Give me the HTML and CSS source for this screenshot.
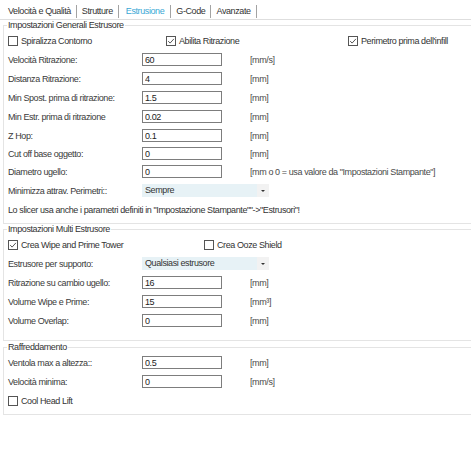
FILE: index.html
```html
<!DOCTYPE html>
<html lang="it">
<head>
<meta charset="utf-8">
<title>Estrusione</title>
<link rel="stylesheet" href="styles.css">
</head>
<body>
<div class="window">
  <nav class="tabs">
    <span class="tab">Velocità e Qualità</span>
    <span class="tab">Strutture</span>
    <span class="tab active">Estrusione</span>
    <span class="tab">G-Code</span>
    <span class="tab">Avanzate</span>
  </nav>
  <div class="panel">
    <fieldset class="group">
      <legend>Impostazioni Generali Estrusore</legend>
      <div class="row checks">
        <label class="check w158"><svg class="box" viewBox="0 0 10 10"><rect x="0.5" y="0.5" width="9" height="9" fill="#fff" stroke="#555"/></svg>Spiralizza Contorno</label>
        <label class="check w182"><svg class="box" viewBox="0 0 10 10"><rect x="0.5" y="0.5" width="9" height="9" fill="#fff" stroke="#555"/><path d="M2.2 5.1 L4.1 7.1 L7.9 2.9" fill="none" stroke="#444" stroke-width="0.9"/></svg>Abilita Ritrazione</label>
        <label class="check"><svg class="box" viewBox="0 0 10 10"><rect x="0.5" y="0.5" width="9" height="9" fill="#fff" stroke="#555"/><path d="M2.2 5.1 L4.1 7.1 L7.9 2.9" fill="none" stroke="#444" stroke-width="0.9"/></svg>Perimetro prima dell'infill</label>
      </div>
      <div class="row"><span class="lbl">Velocità Ritrazione:</span><input class="field" value="60" readonly><span class="unit">[mm/s]</span></div>
      <div class="row"><span class="lbl">Distanza Ritrazione:</span><input class="field" value="4" readonly><span class="unit">[mm]</span></div>
      <div class="row"><span class="lbl">Min Spost. prima di ritrazione:</span><input class="field" value="1.5" readonly><span class="unit">[mm]</span></div>
      <div class="row"><span class="lbl">Min Estr. prima di ritrazione</span><input class="field" value="0.02" readonly><span class="unit">[mm]</span></div>
      <div class="row"><span class="lbl">Z Hop:</span><input class="field" value="0.1" readonly><span class="unit">[mm]</span></div>
      <div class="row tight"><span class="lbl">Cut off base oggetto:</span><input class="field" value="0" readonly><span class="unit">[mm]</span></div>
      <div class="row"><span class="lbl">Diametro ugello:</span><input class="field" value="0" readonly><span class="unit">[mm o 0 = usa valore da "Impostazioni Stampante"]</span></div>
      <div class="row"><span class="lbl">Minimizza attrav. Perimetri::</span><span class="select"><span class="select-value">Sempre</span><span class="select-arrow"></span></span></div>
      <div class="row"><span class="note">Lo slicer usa anche i parametri definiti in "Impostazione Stampante""-&gt;"Estrusori"!</span></div>
    </fieldset>

    <fieldset class="group multi">
      <legend>Impostazioni Multi Estrusore</legend>
      <div class="row checks">
        <label class="check w196"><svg class="box" viewBox="0 0 10 10"><rect x="0.5" y="0.5" width="9" height="9" fill="#fff" stroke="#555"/><path d="M2.2 5.1 L4.1 7.1 L7.9 2.9" fill="none" stroke="#444" stroke-width="0.9"/></svg>Crea Wipe and Prime Tower</label>
        <label class="check"><svg class="box" viewBox="0 0 10 10"><rect x="0.5" y="0.5" width="9" height="9" fill="#fff" stroke="#555"/></svg>Crea Ooze Shield</label>
      </div>
      <div class="row"><span class="lbl">Estrusore per supporto:</span><span class="select"><span class="select-value">Qualsiasi estrusore</span><span class="select-arrow"></span></span></div>
      <div class="row"><span class="lbl">Ritrazione su cambio ugello:</span><input class="field" value="16" readonly><span class="unit">[mm]</span></div>
      <div class="row"><span class="lbl">Volume Wipe e Prime:</span><input class="field" value="15" readonly><span class="unit">[mm³]</span></div>
      <div class="row"><span class="lbl">Volume Overlap:</span><input class="field" value="0" readonly><span class="unit">[mm]</span></div>
    </fieldset>

    <fieldset class="group cooling">
      <legend>Raffreddamento</legend>
      <div class="row"><span class="lbl">Ventola max a altezza::</span><input class="field" value="0.5" readonly><span class="unit">[mm]</span></div>
      <div class="row"><span class="lbl">Velocità minima:</span><input class="field" value="0" readonly><span class="unit">[mm/s]</span></div>
      <div class="row checks">
        <label class="check"><svg class="box" viewBox="0 0 10 10"><rect x="0.5" y="0.5" width="9" height="9" fill="#fff" stroke="#555"/></svg>Cool Head Lift</label>
      </div>
    </fieldset>
  </div>
</div>
</body>
</html>
```

FILE: styles.css
```css
html, body {
  margin: 0;
  padding: 0;
  background: #ffffff;
  overflow: hidden;
}

body {
  font-family: "Liberation Sans", Arial, sans-serif;
  font-size: 9px;
  letter-spacing: -0.4px;
  color: #333333;
}

.window {
  width: 471px;
  height: 450px;
  overflow: hidden;
}

/* Tabs */
.tabs {
  display: flex;
  height: 19px;
  padding-left: 3px;
  border-bottom: 1px solid #dedede;
}

.tab {
  margin-top: 5px;
  height: 13px;
  line-height: 13px;
  padding: 0 5px 0 5px;
  border-right: 1px solid #a3a3a3;
  color: #333333;
  white-space: nowrap;
}

.tab.active {
  color: #3aa8d5;
  padding: 0 6px 0 7px;
}

/* Panel */
.panel {
  width: 540px;
}

.group {
  margin: 0 0 0 3px;
  padding: 0 0 4px 4px;
  border: 1px solid #e4e4e4;
  border-right: 0;
  min-width: 0;
}

.group legend {
  padding: 0 1px;
  margin-left: -1px;
  height: 10px;
  line-height: 10px;
  color: #333333;
}

.group.multi {
  padding-bottom: 10px;
}

.group.cooling {
  margin-top: 1px;
}

.row {
  display: flex;
  align-items: center;
  height: 19px;
  white-space: nowrap;
}

.row.tight {
  height: 17px;
}

.row.checks:first-of-type,
.group legend + .row {
  margin-top: 1px;
}

.lbl {
  flex: none;
  width: 134px;
  color: #3a3a3a;
}

.field {
  flex: none;
  box-sizing: border-box;
  width: 80px;
  height: 13px;
  margin: 0;
  padding: 0 2px;
  border: 1px solid #7d7d7d;
  border-radius: 0;
  background: #ffffff;
  font-family: "Liberation Sans", Arial, sans-serif;
  font-size: 9px;
  letter-spacing: -0.4px;
  color: #222222;
  outline: none;
}

.unit {
  margin-left: 28px;
  color: #4a4a4a;
}

.note {
  color: #333333;
}

/* Checkboxes */
.check {
  display: flex;
  align-items: center;
  flex: none;
  color: #333333;
}

.check.w158 { width: 158px; }
.check.w182 { width: 182px; }
.check.w196 { width: 196px; }

.box {
  width: 10px;
  height: 10px;
  margin-right: 3px;
  flex: none;
}

/* Dropdown */
.select {
  display: flex;
  flex: none;
  width: 127px;
  height: 13px;
  background: #e7f2f6;
}

.select-value {
  flex: 1;
  padding-left: 3px;
  line-height: 13px;
  color: #333333;
}

.select-arrow {
  flex: none;
  width: 12px;
  height: 13px;
  background: #f2f2f2;
  display: flex;
  align-items: center;
  justify-content: center;
}

.select-arrow::after {
  content: "";
  width: 0;
  height: 0;
  border-left: 2px solid transparent;
  border-right: 2px solid transparent;
  border-top: 2.5px solid #333333;
}
```
